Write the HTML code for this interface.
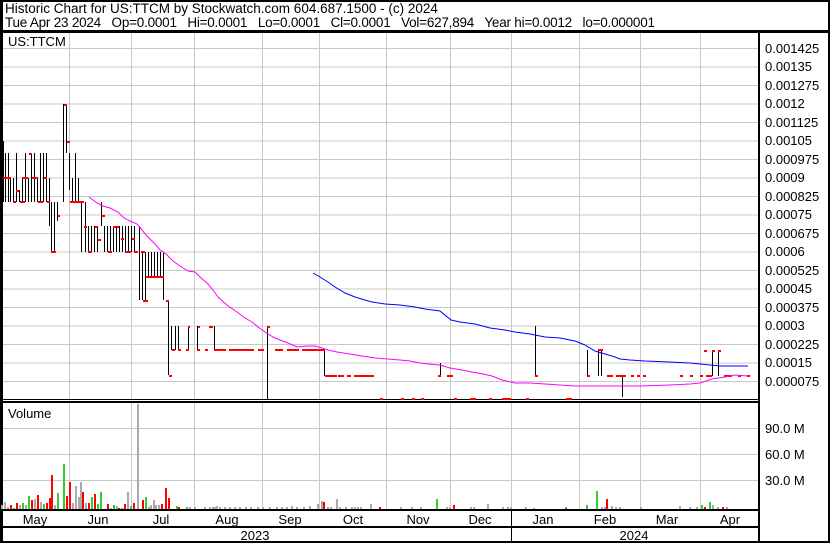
<!DOCTYPE html>
<html><head><meta charset="utf-8"><style>
html,body{margin:0;padding:0;background:#fff;}
body{width:830px;height:543px;overflow:hidden;}
svg text{font-family:"Liberation Sans",Arial,sans-serif;font-size:13px;fill:#000;white-space:pre;}
svg text.h{font-size:13.5px;}
</style></head><body>
<svg width="830" height="543" viewBox="0 0 830 543" xmlns="http://www.w3.org/2000/svg" shape-rendering="crispEdges">
<rect x="0" y="0" width="830" height="543" fill="#fff"/>
<text class="h" x="5" y="13">Historic Chart for US:TTCM by Stockwatch.com 604.687.1500 - (c) 2024</text>
<text class="h" x="5" y="27" textLength="650">Tue Apr 23 2024   Op=0.0001   Hi=0.0001   Lo=0.0001   Cl=0.0001   Vol=627,894   Year hi=0.0012   lo=0.000001</text>
<!-- grids -->
<g stroke="#c8c8c8" stroke-width="1">
<path d="M3 48.5H759M3 67H759M3 85.5H759M3 104H759M3 122.5H759M3 141H759M3 159.5H759M3 178H759M3 196.5H759M3 215H759M3 233.5H759M3 252H759M3 270.5H759M3 289H759M3 307.5H759M3 326H759M3 344.5H759M3 363H759M3 381.5H759"/>
<path d="M3 428.5H759M3 454.5H759M3 480.5H759"/>
<path d="M69.5 48V400M131.5 33V400M194.5 33V400M262.5 33V400M319.5 33V400M386.5 33V400M450.5 33V400M511.5 33V400M579.5 33V400M640.5 33V400M700.5 33V400"/>
<path d="M69.5 402V509M131.5 402V509M194.5 402V509M262.5 402V509M319.5 402V509M386.5 402V509M450.5 402V509M511.5 402V509M579.5 402V509M640.5 402V509M700.5 402V509"/>
</g>
<rect x="3" y="33" width="66" height="15" fill="#fff"/>
<path d="M69.5 33V48M3 48.5H69" stroke="#c8c8c8"/>
<text x="8" y="46">US:TTCM</text>
<!-- borders -->
<g fill="#000">
<rect x="0" y="0" width="830" height="2"/>
<rect x="828" y="0" width="2" height="543"/>
<rect x="0" y="30" width="830" height="3"/>
<rect x="0" y="0" width="3" height="543"/>
<rect x="758" y="31" width="2" height="512"/>
<rect x="0" y="399" width="760" height="1"/>
<rect x="0" y="401" width="760" height="2"/>
<rect x="0" y="509" width="760" height="2"/>
<rect x="0" y="526" width="760" height="2"/>
<rect x="0" y="541" width="830" height="2"/>
<rect x="511" y="511" width="1" height="30"/>
</g>
<!-- price labels -->
<g>
<text x="765" y="53">0.001425</text><text x="765" y="71">0.00135</text><text x="765" y="90">0.001275</text>
<text x="765" y="108">0.0012</text><text x="765" y="127">0.001125</text><text x="765" y="145">0.00105</text>
<text x="765" y="164">0.000975</text><text x="765" y="182">0.0009</text><text x="765" y="201">0.000825</text>
<text x="765" y="219">0.00075</text><text x="765" y="238">0.000675</text><text x="765" y="256">0.0006</text>
<text x="765" y="275">0.000525</text><text x="765" y="293">0.00045</text><text x="765" y="312">0.000375</text>
<text x="765" y="330">0.0003</text><text x="765" y="349">0.000225</text><text x="765" y="367">0.00015</text>
<text x="765" y="386">0.000075</text>
<text x="765" y="433">90.0 M</text><text x="765" y="459">60.0 M</text><text x="765" y="485">30.0 M</text>
</g>
<text x="8" y="418">Volume</text>
<!-- month labels -->
<g text-anchor="middle">
<text x="35" y="524">May</text><text x="98" y="524">Jun</text><text x="161" y="524">Jul</text><text x="227" y="524">Aug</text>
<text x="290" y="524">Sep</text><text x="353" y="524">Oct</text><text x="418" y="524">Nov</text><text x="480" y="524">Dec</text>
<text x="543" y="524">Jan</text><text x="605" y="524">Feb</text><text x="667" y="524">Mar</text><text x="730" y="524">Apr</text>
<text x="255" y="540">2023</text><text x="634" y="540">2024</text>
</g>
<!-- price bars -->
<g stroke="#000" stroke-width="1">
<path d="M3.5 141V202M5.5 153V202M8.5 153V202M10.5 177V202M13.5 178V202M16.5 153V202M19.5 190V202M22.5 178V202M25.5 153V202M28.5 178V202M31.5 153V202M34.5 153V202M37.5 178V202M40.5 153V202M43.5 153V202M46.5 153V202M49.5 178V226M51.5 202V252M54.5 202V252M57.5 202V221M63.5 104V202M66.5 104V153M69.5 153V190M72.5 178V202M75.5 153V202M78.5 178V202M81.5 202V252M85.5 202V252M88.5 226V252M91.5 226V252M94.5 226V252M97.5 226V252M101.5 202V226M104.5 226V252M107.5 226V252M110.5 226V252M113.5 226V252M116.5 226V252M119.5 226V252M122.5 226V252M125.5 226V252M128.5 226V252M131.5 226V252M134.5 226V252M139.5 226V300M142.5 252V300M145.5 252V300M148.5 252V276M151.5 252V276M154.5 252V276M157.5 252V276M160.5 252V276M163.5 252V300M168.5 300V375M171.5 326V350M175.5 326V350M178.5 326V350M188.5 326V350M197.5 326V350M214.5 326V350M267.5 326V400M324.5 350V376M440.5 363V376M535.5 326V376M587.5 350V376M598.5 350V376M601.5 350V376M622.5 376V397M712.5 350V376M718.5 350V376"/>
</g>
<g fill="#f00">
<rect x="3" y="177" width="8" height="2"/><rect x="13" y="201" width="3" height="2"/><rect x="16" y="190" width="3" height="2"/>
<rect x="20" y="201" width="5" height="2"/><rect x="22" y="177" width="6" height="2"/><rect x="29" y="153" width="3" height="2"/>
<rect x="32" y="177" width="6" height="2"/><rect x="38" y="201" width="5" height="2"/><rect x="44" y="177" width="3" height="2"/>
<rect x="47" y="201" width="3" height="2"/><rect x="51" y="251" width="5" height="2"/><rect x="58" y="215" width="2" height="2"/>
<rect x="64" y="104" width="3" height="2"/><rect x="67" y="141" width="3" height="2"/><rect x="70" y="201" width="14" height="2"/>
<rect x="84" y="226" width="3" height="2"/><rect x="88" y="251" width="4" height="2"/><rect x="95" y="226" width="3" height="2"/>
<rect x="98" y="239" width="3" height="2"/><rect x="102" y="215" width="3" height="2"/><rect x="108" y="251" width="4" height="2"/>
<rect x="113" y="226" width="6" height="2"/><rect x="121" y="238" width="3" height="2"/><rect x="125" y="251" width="6" height="2"/>
<rect x="132" y="238" width="3" height="2"/><rect x="134" y="251" width="4" height="2"/><rect x="141" y="251" width="4" height="2"/>
<rect x="143" y="300" width="5" height="2"/><rect x="146" y="276" width="18" height="2"/><rect x="166" y="300" width="3" height="2"/>
<rect x="169" y="375" width="3" height="2"/><rect x="172" y="349" width="3" height="2"/><rect x="178" y="349" width="3" height="2"/>
<rect x="186" y="349" width="3" height="2"/><rect x="188" y="326" width="2" height="2"/><rect x="197" y="349" width="3" height="2"/>
<rect x="198" y="326" width="2" height="2"/><rect x="205" y="349" width="3" height="2"/><rect x="209" y="326" width="4" height="2"/>
<rect x="214" y="349" width="12" height="2"/><rect x="229" y="349" width="25" height="2"/><rect x="258" y="349" width="6" height="2"/>
<rect x="267" y="326" width="3" height="2"/><rect x="275" y="349" width="8" height="2"/><rect x="287" y="349" width="12" height="2"/>
<rect x="302" y="349" width="3" height="2"/><rect x="305" y="349" width="20" height="2"/><rect x="325" y="375" width="12" height="2"/>
<rect x="338" y="375" width="6" height="2"/><rect x="347" y="375" width="4" height="2"/><rect x="354" y="375" width="20" height="2"/>
<rect x="438" y="375" width="3" height="2"/><rect x="447" y="375" width="6" height="2"/><rect x="535" y="375" width="3" height="2"/>
<rect x="587" y="375" width="3" height="2"/><rect x="598" y="349" width="5" height="2"/><rect x="607" y="375" width="6" height="2"/>
<rect x="616" y="375" width="10" height="2"/><rect x="631" y="375" width="3" height="2"/><rect x="637" y="375" width="3" height="2"/>
<rect x="643" y="375" width="3" height="2"/><rect x="680" y="375" width="3" height="2"/><rect x="690" y="375" width="3" height="2"/>
<rect x="700" y="375" width="3" height="2"/><rect x="706" y="375" width="6" height="2"/><rect x="704" y="350" width="3" height="2"/>
<rect x="712" y="350" width="3" height="2"/><rect x="718" y="350" width="3" height="2"/><rect x="724" y="375" width="8" height="2"/>
<rect x="738" y="375" width="3" height="2"/><rect x="747" y="375" width="3" height="2"/>
<rect x="380" y="398" width="3" height="2"/><rect x="401" y="398" width="3" height="2"/><rect x="412" y="398" width="3" height="2"/>
<rect x="421" y="398" width="3" height="2"/><rect x="454" y="398" width="3" height="2"/><rect x="470" y="398" width="6" height="2"/>
<rect x="489" y="398" width="3" height="2"/><rect x="502" y="398" width="9" height="2"/><rect x="526" y="398" width="3" height="2"/>
<rect x="566" y="398" width="6" height="2"/>
</g>
<!-- moving averages -->
<polyline fill="none" stroke="#f0f" stroke-width="1" shape-rendering="auto" points="89,197 97,203 103,206 110,208 118,212 124,218 130,221 137,224 142,230 147,236 155,244 160,250 166,254 173,261 180,266 188,271 195,272 200,277 208,284 213,290 218,297 228,306 237,312 245,318 252,322 258,327 265,332 273,337 280,340 288,343 297,347 307,346 315,346 322,348 328,350 337,352 350,354 362,356 375,358 388,359 400,360 410,361 420,363 428,364 440,365 450,368 462,370 472,372 483,374 492,376 502,380 515,383 530,383 545,384 560,385 575,386 600,386 640,386 670,385 690,384 700,383 712,379 725,377 735,375 748,376"/>
<polyline fill="none" stroke="#00f" stroke-width="1" shape-rendering="auto" points="313,273 320,277 328,282 335,287 345,293 355,297 365,300 372,302 385,304 400,305 415,307 425,309 440,311 451,320 460,322 475,324 490,328 505,330 515,332 530,334 545,337 560,338 575,341 585,345 595,351 605,354 615,357 620,359 630,360 645,361 670,362 690,363 700,364 710,365 720,366 748,366"/>
<!-- volume bars -->
<g stroke-width="2" fill="none">
<path stroke="#aaa" d="M2 509v-4M5 509v-7M8 509v-2M20 509v-4M26 509v-4M35 509v-10M41 509v-7M55 509v-4M73 509v-6M76 509v-23M79 509v-12M81 509v-27M86 509v-6M111 509v-1M117 509v-3M128 509v-17M138 509v-105M149 509v-2M151 509v-4M154 509v-9M156 509v-4M159 509v-4M190 509v-2M195 509v-2M205 509v-2M210 509v-2M213 509v-2M215 509v-2M217 509v-3M220 509v-2M225 509v-2M230 509v-2M235 509v-2M240 509v-2M246 509v-2M251 509v-2M258 509v-2M263 509v-2M270 509v-2M277 509v-2M282 509v-2M287 509v-2M292 509v-3M297 509v-2M304 509v-2M310 509v-3M318 509v-5M322 509v-8M328 509v-2M331 509v-2M337 509v-10M340 509v-2M346 509v-2M352 509v-2M355 509v-2M358 509v-2M361 509v-2M371 509v-5M401 509v-2M412 509v-2M421 509v-2M447 509v-2M450 509v-2M471 509v-2M474 509v-2M488 509v-5M503 509v-2M508 509v-2M511 509v-2M526 509v-2M566 509v-2M602 509v-2M605 509v-2M612 509v-3M616 509v-2M620 509v-2M641 509v-2M680 509v-3M690 509v-2M697 509v-2M713 509v-4M718 509v-2M727 509v-2"/>
<path stroke="#f00" d="M11 509v-4M17 509v-6M32 509v-9M38 509v-14M47 509v-6M50 509v-11M52 509v-34M67 509v-13M70 509v-27M83 509v-17M89 509v-6M95 509v-15M108 509v-5M119 509v-1M125 509v-5M134 509v-6M143 509v-9M162 509v-5M166 509v-21M169 509v-11M179 509v-2M324 509v-7M380 509v-2M454 509v-4M566 509v-1M607 509v-10M705 509v-2M723 509v-2"/>
<path stroke="#3c3" d="M14 509v-1M23 509v-6M29 509v-13M44 509v-5M58 509v-16M64 509v-45M92 509v-12M98 509v-5M101 509v-17M114 509v-4M122 509v-1M131 509v-3M146 509v-12M177 509v-3M187 509v-2M437 509v-10M534 509v-1M587 509v-4M597 509v-18M702 509v-4M710 509v-7"/>
</g>
</svg>
</body></html>
